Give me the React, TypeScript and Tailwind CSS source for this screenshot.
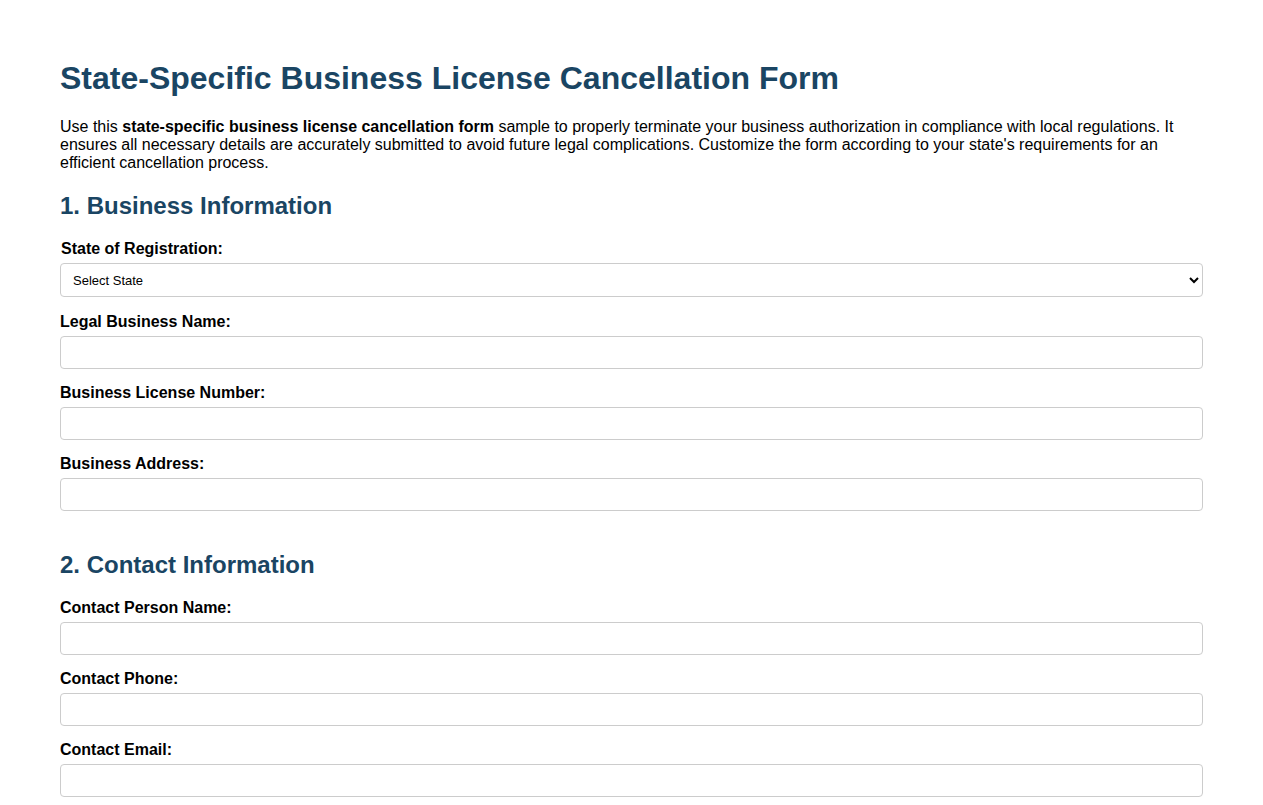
import React from "react";

const Field = ({ label }: { label: string }) => (
  <div>
    <label className="block font-bold text-[16px] leading-[18px] mb-[5px]">{label}</label>
    <input type="text" className="block w-full h-[33px] border border-[#cccccc] rounded-[4px] px-2 mb-[15px] bg-white" />
  </div>
);

export default function App() {
  return (
    <div className="bg-white text-black min-h-screen px-[60px] pt-[60px]" style={{ fontFamily: '"Liberation Sans", Arial, sans-serif' }}>
      <h1 className="text-[32px] font-bold leading-[37px] text-[#1a4563]">State-Specific Business License Cancellation Form</h1>
      <p className="mt-[21px] text-[16px] leading-[18px]">
        Use this <b>state-specific business license cancellation form</b> sample to properly terminate your business authorization in compliance with local regulations. It ensures all necessary details are accurately submitted to avoid future legal complications. Customize the form according to your state's requirements for an efficient cancellation process.
      </p>
      <h2 className="mt-[20px] text-[24px] font-bold leading-[28px] text-[#1a4563]">1. Business Information</h2>
      <div className="mt-[20px]">
        <label className="block font-bold text-[16px] leading-[18px] mb-[5px] pl-px">State of Registration:</label>
        <select className="block w-full h-[34px] border border-[#cccccc] rounded-[4px] px-2 mb-[16px] bg-white text-[13px]" defaultValue="">
          <option value="">Select State</option>
        </select>
        <Field label="Legal Business Name:" />
        <Field label="Business License Number:" />
        <Field label="Business Address:" />
      </div>
      <h2 className="mt-[40px] text-[24px] font-bold leading-[28px] text-[#1a4563]">2. Contact Information</h2>
      <div className="mt-[20px]">
        <Field label="Contact Person Name:" />
        <Field label="Contact Phone:" />
        <Field label="Contact Email:" />
      </div>
    </div>
  );
}
